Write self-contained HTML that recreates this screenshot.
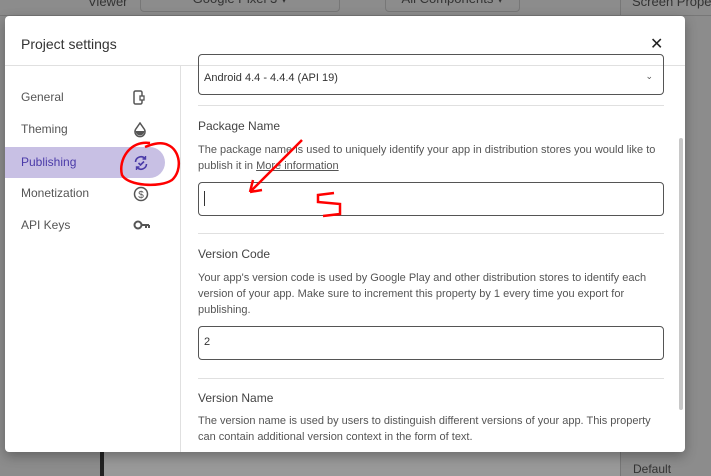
<!DOCTYPE html>
<html><head><meta charset="utf-8"><style>
*{margin:0;padding:0;box-sizing:border-box}
body{width:711px;height:476px;overflow:hidden;background:#8c8c8c;font-family:"Liberation Sans",sans-serif;position:relative}
.bg{position:absolute;color:#333;font-size:13px;white-space:nowrap}
.dlg{position:absolute;left:5px;top:16px;width:680px;height:436px;background:#fff;border-radius:4px;overflow:hidden;box-shadow:0 4px 12px rgba(0,0,0,.3)}
.hdr{position:absolute;left:0;top:0;width:680px;height:50px;border-bottom:1px solid #e0e0e0}
.hdr .t{position:absolute;left:16px;top:20px;font-size:14px;color:#333}
.hdr .x{position:absolute;left:645px;top:18px;font-size:16px;color:#222}
.side{position:absolute;left:0;top:50px;width:176px;height:386px;border-right:1px solid #e0e0e0}
.it{position:absolute;left:0;width:160px;height:31px;font-size:12px;color:#555;padding-left:16px;line-height:31px}
.it.sel{background:#c8c0e4;color:#4a3aa8;border-radius:0 16px 16px 0}
.it svg{position:absolute;left:128px;top:8px}
.c{position:absolute;left:176px;top:50px;width:504px;height:386px}
.lbl{position:absolute;left:17px;font-size:12px;color:#444}
.d{position:absolute;left:17px;width:470px;font-size:11px;line-height:16px;color:#555}
.box{position:absolute;left:17px;width:466px;border:1px solid #555;border-radius:4px}
.hr{position:absolute;left:17px;width:466px;border-top:1px solid #e0e0e0}
</style></head><body>
<div class="bg" style="left:88px;top:-6px">Viewer</div>
<div class="bg" style="left:140px;top:-10px;width:200px;height:22px;border:1px solid #777;border-radius:4px;text-align:center">Google Pixel 3 ▾</div>
<div class="bg" style="left:385px;top:-10px;width:135px;height:22px;border:1px solid #777;border-radius:4px;text-align:center">All Components ▾</div>
<div class="bg" style="left:632px;top:-6px">Screen Prope</div>
<div class="bg" style="left:0;top:0;width:711px;height:16px;border-bottom:1px solid #777"></div>
<div class="bg" style="left:620px;top:0;width:1px;height:476px;background:#777"></div>
<div class="bg" style="left:633px;top:462px;font-size:12px">Default</div>
<div class="bg" style="left:100px;top:452px;width:520px;height:24px;background:#999;border-left:4px solid #222"></div>

<div class="dlg">
<div class="hdr"><div class="t">Project settings</div><div class="x">✕</div></div>
<div class="side">
<div class="it" style="top:16px">General<svg width="12" height="16" viewBox="0 0 12 16"><rect x="1" y="1" width="8" height="13" rx="1.5" fill="none" stroke="#555" stroke-width="1.5"/><rect x="7" y="6" width="4" height="4" fill="#fff" stroke="#555" stroke-width="1.3"/></svg></div>
<div class="it" style="top:48px">Theming<svg width="14" height="16" viewBox="0 0 14 16"><path d="M7 1L2.5 7.5a5 5 0 1 0 9 0Z" fill="none" stroke="#555" stroke-width="1.5"/><path d="M2.5 9h9a4.5 4.5 0 0 1-9 0z" fill="#555"/></svg></div>
<div class="it sel" style="top:81px">Publishing<svg width="16" height="16" viewBox="0 0 16 16"><path d="M2.5 7a5.5 5.5 0 0 1 9.5-3.5M13.5 9a5.5 5.5 0 0 1-9.5 3.5" fill="none" stroke="#4a3aa8" stroke-width="1.6"/><path d="M12.5 1v3h-3M3.5 15v-3h3" fill="none" stroke="#4a3aa8" stroke-width="1.4"/><path d="M5.5 8l2 2 3.5-3.5" fill="none" stroke="#4a3aa8" stroke-width="1.6"/></svg></div>
<div class="it" style="top:112px">Monetization<svg width="16" height="16" viewBox="0 0 16 16"><circle cx="8" cy="8" r="6.5" fill="none" stroke="#555" stroke-width="1.5"/><text x="8" y="12" font-size="10" text-anchor="middle" fill="#555" font-family="Liberation Sans">$</text></svg></div>
<div class="it" style="top:144px">API Keys<svg width="18" height="14" viewBox="0 0 18 14"><circle cx="5" cy="7" r="3.5" fill="none" stroke="#555" stroke-width="2"/><path d="M8.5 7H16M13 7v3M16 7v3" stroke="#555" stroke-width="2" fill="none"/></svg></div>
</div>
<div class="c">
<div class="box" style="top:-12px;height:41px"><span style="position:absolute;left:5px;top:17px;font-size:11px;color:#333">Android 4.4 - 4.4.4 (API 19)</span><span style="position:absolute;right:10px;top:16px;font-size:9px;color:#555">⌄</span></div>
<div class="hr" style="top:39px"></div>
<div class="lbl" style="top:53px">Package Name</div>
<div class="d" style="top:76px">The package name is used to uniquely identify your app in distribution stores you would like to publish it in <u>More information</u></div>
<div class="box" style="top:116px;height:34px"><span style="position:absolute;left:5px;top:8px;width:1px;height:15px;background:#333"></span></div>
<div class="hr" style="top:167px"></div>
<div class="lbl" style="top:181px">Version Code</div>
<div class="d" style="top:204px;width:462px">Your app's version code is used by Google Play and other distribution stores to identify each version of your app. Make sure to increment this property by 1 every time you export for publishing.</div>
<div class="box" style="top:260px;height:34px"><span style="position:absolute;left:5px;top:9px;font-size:11px;color:#333">2</span></div>
<div class="hr" style="top:312px"></div>
<div class="lbl" style="top:325px">Version Name</div>
<div class="d" style="top:347px">The version name is used by users to distinguish different versions of your app. This property can contain additional version context in the form of text.</div>
<div class="box" style="top:389px;height:34px"></div>
<div style="position:absolute;left:498px;top:72px;width:4px;height:272px;background:#c8c8c8;border-radius:2px"></div>
</div>
</div>
<svg style="position:absolute;left:0;top:0" width="711" height="476">
<path d="M150 143C130 140 118 160 122 175C128 186 160 188 172 180C183 170 180 150 168 145C160 141 150 145 145 147" fill="none" stroke="red" stroke-width="2.5"/>
<path d="M302 140L250 192M250 192L253 180M250 192L262 190" fill="none" stroke="red" stroke-width="2.5"/>
<path d="M334 193L318 195L318 202L340 204L340 214L323 216" fill="none" stroke="red" stroke-width="2.5"/>
</svg>
</body></html>
